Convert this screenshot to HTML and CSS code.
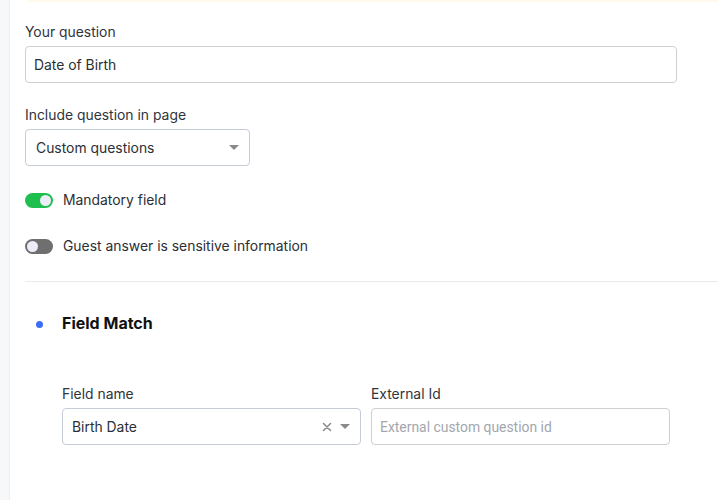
FILE: index.html
```html
<!DOCTYPE html>
<html>
<head>
<meta charset="utf-8">
<link rel="stylesheet" href="styles.css">
</head>
<body>
<div class="page">
  <aside class="rail"></aside>
  <main class="main">
    <div class="topband"></div>
    <div class="content">
      <div class="field">
        <label class="label">Your question</label>
        <div class="input wide">Date of Birth</div>
      </div>
      <div class="field">
        <label class="label">Include question in page</label>
        <div class="select short">
          <span>Custom questions</span>
          <span class="caret"></span>
        </div>
      </div>
      <div class="toggle-row">
        <span class="toggle on"><span class="knob"></span></span>
        <span class="toggle-label">Mandatory field</span>
      </div>
      <div class="toggle-row">
        <span class="toggle off"><span class="knob"></span></span>
        <span class="toggle-label">Guest answer is sensitive information</span>
      </div>
      <hr class="divider">
      <div class="section-head">
        <span class="dot"></span>
        <span class="section-title">Field Match</span>
      </div>
      <div class="match-grid">
        <div class="field">
          <label class="label">Field name</label>
          <div class="select">
            <span>Birth Date</span>
            <span class="icons">
              <svg class="clear" width="10" height="10" viewBox="0 0 10 10"><path d="M1.5 1.5L8.5 8.5M8.5 1.5L1.5 8.5" stroke="#8a8a8a" stroke-width="1.5" stroke-linecap="round"/></svg>
              <span class="caret"></span>
            </span>
          </div>
        </div>
        <div class="field">
          <label class="label">External Id</label>
          <div class="input placeholder">External custom question id</div>
        </div>
      </div>
    </div>
  </main>
</div>
</body>
</html>
```

FILE: styles.css
```css
* { box-sizing: border-box; }
html, body { margin: 0; padding: 0; background: #fff; }
body {
  font-family: "Inter", "Noto Sans", sans-serif;
  font-size: 13.9px;
  color: #2b2f36;
}
.page { display: flex; min-height: 500px; }
.rail {
  width: 10px;
  flex: none;
  background: #f7f8fa;
  border-right: 1px solid #eceef1;
}
.main { flex: 1; display: flex; flex-direction: column; }
.topband { height: 2px; margin-left: 18px; background: #fffaec; }
.content { padding: 0 0 0 15px; display: flex; flex-direction: column; }
.field { display: flex; flex-direction: column; }
.label { display: block; line-height: 18px; margin-bottom: 5px; color: #30343b; }
.content > .field:first-child { margin-top: 21px; }
.content > .field:nth-child(2) { margin-top: 23px; }
.input, .select {
  height: 37px;
  border: 1px solid #cfcfcf;
  border-radius: 4px;
  display: flex;
  align-items: center;
  padding: 0 8px;
  color: #2b2f36;
}
.wide { width: 652px; }
.select {
  border-color: #c5ccd8;
  justify-content: space-between;
  padding: 0 10px 0 9px;
}
.short { width: 225px; padding-left: 10px; }
.caret {
  width: 0; height: 0;
  border-left: 5px solid transparent;
  border-right: 5px solid transparent;
  border-top: 5px solid #8a8a8a;
}
.toggle-row { display: flex; align-items: center; gap: 10px; height: 18px; }
.toggle-row:nth-child(3) { margin-top: 25px; }
.toggle-row:nth-child(4) { margin-top: 28px; }
.toggle {
  width: 28px; height: 15px; border-radius: 8px;
  position: relative; flex: none;
}
.toggle.on { background: #1fbf4f; }
.toggle.off { background: #6f6f6f; }
.knob {
  position: absolute; top: 2px;
  width: 11px; height: 11px; border-radius: 50%;
  background: #eeedf7;
}
.on .knob { right: 2px; }
.off .knob { left: 2px; }
.divider {
  border: 0; border-top: 1px solid #ebebeb;
  margin: 26px 0 0 0; width: 100%;
}
.section-head { display: flex; align-items: center; margin-top: 31px; height: 20px; }
.dot {
  width: 7px; height: 7px; border-radius: 50%;
  background: #3b6ef5; margin-left: 11px; margin-right: 19px; margin-top: 2px;
}
.section-title { font-weight: 700; font-size: 16px; color: #111; }
.match-grid {
  display: grid;
  grid-template-columns: 299px 299px;
  gap: 10px;
  margin-top: 52px;
  margin-left: 37px;
}
.icons { display: flex; align-items: center; gap: 8px; }
.placeholder { color: #a3a7ad; font-family: "Roboto", sans-serif; padding-left: 8px; }
```
